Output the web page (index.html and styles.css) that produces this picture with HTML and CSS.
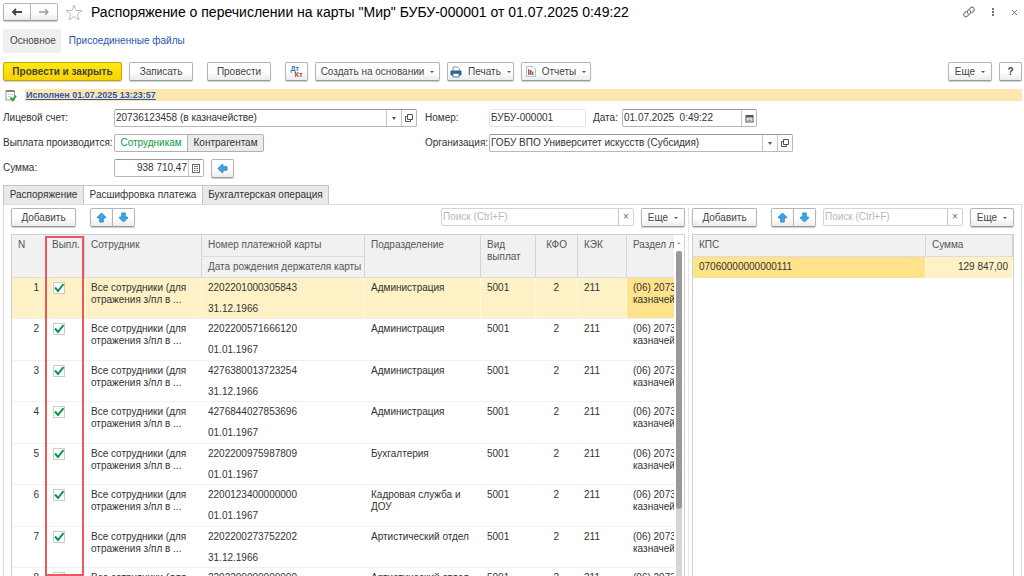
FILE: index.html
```html
<!DOCTYPE html>
<html lang="ru">
<head>
  <meta charset="UTF-8">
  <meta name="viewport" content="width=device-width, initial-scale=1">
  <title>Распоряжение о перечислении на карты "Мир"</title>
  <link rel="stylesheet" href="styles.css">
</head>
<body>
  <!-- Icons used more than once -->
  <svg width="0" height="0" class="sprite" aria-hidden="true">
    <symbol id="i-up" viewBox="0 0 12 12">
      <path d="M6 1 L10.5 5.5 V6.5 H8 V11 H4 V6.5 H1.5 V5.5 Z" fill="#3aa5ea" stroke="#2178bd" stroke-width="0.8" stroke-linejoin="round"/>
    </symbol>
    <symbol id="i-open" viewBox="0 0 10 10">
      <path d="M3.5 1.5 H8.5 V6.5 H3.5 Z M3.5 3.5 H1.5 V8.5 H6.5 V6.5" fill="none" stroke="#555" stroke-width="1"/>
    </symbol>
  </svg>

  <header class="title-bar">
    <div class="btn-group nav-group">
      <button class="btn" aria-label="Назад">
        <svg width="12" height="8" viewBox="0 0 12 8"><path d="M11 4 H2 M5 1 L2 4 L5 7" fill="none" stroke="#444" stroke-width="1.8"/></svg>
      </button>
      <button class="btn" aria-label="Вперед">
        <svg width="12" height="8" viewBox="0 0 12 8"><path d="M1 4 H10 M7 1 L10 4 L7 7" fill="none" stroke="#999" stroke-width="1.3"/></svg>
      </button>
    </div>
    <button class="icon-btn star" aria-label="В избранное">
      <svg width="18" height="17" viewBox="0 0 18 17"><path d="M9 1 L11 6.5 L17 6.6 L12.3 10.2 L14 15.9 L9 12.5 L4 15.9 L5.7 10.2 L1 6.6 L7 6.5 Z" fill="#fff" stroke="#bbb" stroke-width="1"/></svg>
    </button>
    <h1>Распоряжение о перечислении на карты "Мир" БУБУ-000001 от 01.07.2025 0:49:22</h1>
    <div class="window-tools">
      <button class="icon-btn" aria-label="Получить ссылку">
        <svg width="12" height="12" viewBox="0 0 12 12"><g fill="none" stroke="#777" stroke-width="1.1" stroke-linecap="round"><path d="M5 7.6 A2.4 2.4 0 0 1 5 4.4 L7.6 1.8 A2.2 2.2 0 0 1 10.7 4.9 L9 6.6"/><path d="M7 4.4 A2.4 2.4 0 0 1 7 7.6 L4.4 10.2 A2.2 2.2 0 0 1 1.3 7.1 L3 5.4"/></g></svg>
      </button>
      <button class="icon-btn" aria-label="Меню">
        <svg width="4" height="10" viewBox="0 0 4 10"><g fill="#777"><rect x="1" y="1" width="2" height="2"/><rect x="1" y="4" width="2" height="2"/><rect x="1" y="7" width="2" height="2"/></g></svg>
      </button>
      <button class="icon-btn" aria-label="Закрыть">
        <svg width="7" height="7" viewBox="0 0 7 7"><path d="M1 1 L6 6 M6 1 L1 6" stroke="#777" stroke-width="1"/></svg>
      </button>
    </div>
  </header>

  <nav class="sections">
    <a href="#" class="current">Основное</a>
    <a href="#">Присоединенные файлы</a>
  </nav>

  <div class="commands">
    <button class="btn primary">Провести и закрыть</button>
    <button class="btn save">Записать</button>
    <button class="btn post">Провести</button>
    <button class="btn dtkt" aria-label="Показать проводки"><span class="dt">Дт</span><span class="kt">Кт</span></button>
    <button class="btn menu create">Создать на основании</button>
    <button class="btn menu print">
      <svg width="12" height="12" viewBox="0 0 12 12"><path d="M3 5 V1 H7.5 L9.5 3 V5" fill="#fff" stroke="#7b9bb8" stroke-width="1"/><rect x="0.5" y="4.5" width="11" height="5" rx="1" fill="#34618c"/><rect x="3" y="7.5" width="6" height="3.5" fill="#fff" stroke="#5580a5" stroke-width="1"/></svg>
      Печать
    </button>
    <button class="btn menu reports">
      <svg width="10" height="11" viewBox="0 0 10 11"><path d="M0.5 0.5 H7 L9.5 3 V10.5 H0.5 Z" fill="#fff" stroke="#b4c0ce"/><rect x="2" y="3" width="1" height="6" fill="#4a78b0"/><rect x="3.5" y="4" width="2" height="5" fill="#d93a2b"/><rect x="6" y="5.5" width="1.5" height="3.5" fill="#3c9a42"/></svg>
      Отчеты
    </button>
    <button class="btn menu more push">Еще</button>
    <button class="btn help">?</button>
  </div>

  <div class="status">
    <svg width="12" height="13" viewBox="0 0 12 13"><rect x="1" y="2" width="8.5" height="9" fill="#fff" stroke="#999"/><rect x="1" y="1" width="8.5" height="2" fill="#8c8078"/><path d="M3 5.5 H8 M3 7.5 H6" stroke="#ccc"/><path d="M5.5 8.5 L7.7 11.2 L11 6.5" fill="none" stroke="#27a343" stroke-width="2"/></svg>
    <div class="status-line"><a href="#">Исполнен 01.07.2025 13:23:57</a></div>
  </div>

  <form class="details">
    <div class="details-left">
      <label for="account">Лицевой счет:</label>
      <div class="field">
        <input type="text" id="account" value="20736123458 (в казначействе)">
        <button type="button" class="drop" aria-label="Выбрать"></button>
        <button type="button" aria-label="Открыть"><svg width="10" height="10"><use href="#i-open"/></svg></button>
      </div>
      <span>Выплата производится:</span>
      <div class="switch">
        <input type="radio" name="payee" id="payee-staff" checked>
        <label for="payee-staff">Сотрудникам</label>
        <input type="radio" name="payee" id="payee-partner">
        <label for="payee-partner">Контрагентам</label>
      </div>
      <label for="sum">Сумма:</label>
      <div class="sum-row">
        <div class="field sum-field">
          <input type="text" id="sum" value="938 710,47">
          <button type="button" aria-label="Калькулятор">
            <svg width="8" height="9" viewBox="0 0 8 9"><rect x="0.5" y="0.5" width="7" height="8" fill="#fff" stroke="#666"/><path d="M2 2.5 H6" stroke="#666"/><path d="M2 4.5 H6 M2 6.5 H6" stroke="#666" stroke-dasharray="1 0.5"/></svg>
          </button>
        </div>
        <button type="button" class="btn fill" aria-label="Заполнить сумму"><svg class="left" width="11" height="11"><use href="#i-up"/></svg></button>
      </div>
    </div>
    <div class="details-right">
      <label for="number">Номер:</label>
      <div class="number-row">
        <div class="field readonly"><input type="text" id="number" value="БУБУ-000001" readonly></div>
        <label for="date">Дата:</label>
        <div class="field date-field">
          <input type="text" id="date" value="01.07.2025  0:49:22">
          <button type="button" aria-label="Календарь">
            <svg width="9" height="9" viewBox="0 0 9 9"><rect x="1" y="1.5" width="7" height="6.5" fill="#fff" stroke="#555"/><path d="M1 2.5 H8" stroke="#555" stroke-width="2"/><path d="M2.5 5 H7 M2.5 6.5 H7" stroke="#777" stroke-dasharray="1 0.5"/></svg>
          </button>
        </div>
      </div>
      <label for="org">Организация:</label>
      <div class="field">
        <input type="text" id="org" value="ГОБУ ВПО Университет искусств (Субсидия)">
        <button type="button" class="drop" aria-label="Выбрать"></button>
        <button type="button" aria-label="Открыть"><svg width="10" height="10"><use href="#i-open"/></svg></button>
      </div>
    </div>
  </form>

  <div class="tabs" role="tablist">
    <button role="tab" class="tab-order">Распоряжение</button>
    <button role="tab" class="tab-detail active" aria-selected="true">Расшифровка платежа</button>
    <button role="tab" class="tab-entry">Бухгалтерская операция</button>
  </div>

  <main class="panel">
    <section class="pane">
      <div class="pane-tools">
        <button class="btn add">Добавить</button>
        <div class="btn-group">
          <button class="btn" aria-label="Вверх"><svg width="11" height="11"><use href="#i-up"/></svg></button>
          <button class="btn" aria-label="Вниз"><svg class="down" width="11" height="11"><use href="#i-up"/></svg></button>
        </div>
        <div class="field search push">
          <input type="text" placeholder="Поиск (Ctrl+F)" aria-label="Поиск сотрудника">
          <button aria-label="Очистить">×</button>
        </div>
        <button class="btn menu more">Еще</button>
      </div>
      <div class="grid-box">
        <div class="grid-scroll">
          <table class="grid staff" id="staff">
            <colgroup>
              <col class="c-num"><col class="c-paid"><col class="c-name"><col class="c-card"><col class="c-dept">
              <col class="c-kind"><col class="c-kfo"><col class="c-kek"><col>
            </colgroup>
            <thead>
              <tr>
                <th rowspan="2">N</th>
                <th rowspan="2">Выпл.</th>
                <th rowspan="2">Сотрудник</th>
                <th class="card">Номер платежной карты</th>
                <th rowspan="2">Подразделение</th>
                <th rowspan="2">Вид выплат</th>
                <th rowspan="2" class="right">КФО</th>
                <th rowspan="2">КЭК</th>
                <th rowspan="2" class="cut">Раздел л</th>
              </tr>
              <tr><th class="card">Дата рождения держателя карты</th></tr>
            </thead>
          </table>
        </div>
        <div class="scrollbar"><span class="scroll-up"></span><span class="thumb"></span></div>
        <div class="marker"></div>
      </div>
    </section>

    <section class="pane pane-right">
      <div class="pane-tools">
        <button class="btn add">Добавить</button>
        <div class="btn-group">
          <button class="btn" aria-label="Вверх"><svg width="11" height="11"><use href="#i-up"/></svg></button>
          <button class="btn" aria-label="Вниз"><svg class="down" width="11" height="11"><use href="#i-up"/></svg></button>
        </div>
        <div class="field search grow">
          <input type="text" placeholder="Поиск (Ctrl+F)" aria-label="Поиск КПС">
          <button aria-label="Очистить">×</button>
        </div>
        <button class="btn menu more">Еще</button>
      </div>
      <div class="grid-box">
        <table class="grid kps">
          <colgroup><col><col class="c-sum"></colgroup>
          <thead><tr><th>КПС</th><th>Сумма</th></tr></thead>
          <tbody class="selected"><tr><td class="focus">07060000000000111</td><td class="amount">129 847,00</td></tr></tbody>
        </table>
      </div>
    </section>
  </main>

  <script>
    // card number, birth date, department
    const rows = [
      ['2202201000305843', '31.12.1966', 'Администрация'],
      ['2202200571666120', '01.01.1967', 'Администрация'],
      ['4276380013723254', '31.12.1966', 'Администрация'],
      ['4276844027853696', '01.01.1967', 'Администрация'],
      ['2202200975987809', '01.01.1967', 'Бухгалтерия'],
      ['2200123400000000', '01.01.1967', 'Кадровая служба и ДОУ'],
      ['2202200273752202', '31.12.1966', 'Артистический отдел'],
      ['2202200000000000', '01.01.1967', 'Артистический отдел']
    ];

    const staff = document.getElementById('staff');

    // Each employee takes two lines because of the card / birth date column
    rows.forEach(([card, birth, dept], index) => {
      const body = document.createElement('tbody');
      if (index === 0) body.className = 'selected';
      body.innerHTML = `
        <tr>
          <td rowspan="2" class="num">${index + 1}</td>
          <td rowspan="2"><input type="checkbox" class="check" aria-label="Выплачено" checked></td>
          <td rowspan="2">Все сотрудники (для отражения з/пл в ...</td>
          <td>${card}</td>
          <td rowspan="2">${dept}</td>
          <td rowspan="2">5001</td>
          <td rowspan="2" class="kfo">2</td>
          <td rowspan="2">211</td>
          <td rowspan="2" class="cut ${index === 0 ? 'focus' : ''}">(06) 2073<br>казначей</td>
        </tr>
        <tr><td>${birth}</td></tr>
      `;
      staff.appendChild(body);
    });
  </script>
</body>
</html>
```
FILE: styles.css
```css
* {
  box-sizing: border-box;
}

body {
  display: flex;
  flex-direction: column;
  height: 100vh;
  margin: 0;
  padding: 0 2px 0 3px;
  overflow: hidden;
  background: #fff;
  color: #333;
  font: 10px/12px "Liberation Sans", Arial, sans-serif;
}

button,
input {
  margin: 0;
  color: inherit;
  font: inherit;
}

a {
  color: #2a56b0;
  text-decoration: none;
}

svg {
  display: block;
  flex: none;
}

.sprite {
  position: absolute;
}

.push {
  margin-left: auto;
}

.down {
  transform: rotate(180deg);
}

.left {
  transform: rotate(-90deg);
}

/* Buttons */
.btn {
  display: flex;
  flex: none;
  align-items: center;
  justify-content: center;
  gap: 6px;
  height: 19px;
  padding: 0;
  border: 1px solid #b5b5b5;
  border-bottom-color: #999;
  border-radius: 2px;
  background: linear-gradient(#fff 50%, #ececec);
  box-shadow: 0 1px 1px #ccc;
  color: #444;
  white-space: nowrap;
  cursor: pointer;
}

.btn:hover {
  background: #f2f2f2;
}

.btn.primary {
  width: 119px;
  border-color: #c4a600;
  background: linear-gradient(#ffe914, #f7d400);
  font-weight: bold;
}

.btn.menu::after {
  content: "";
  border: 2px solid transparent;
  border-top-color: #555;
  border-bottom: 0;
}

.btn.save {
  width: 64px;
}

.btn.post {
  width: 64px;
  margin-left: 7px;
}

.btn.dtkt {
  width: 23px;
  gap: 0;
  margin-left: 7px;
  font-size: 7px;
  font-weight: bold;
  line-height: 7px;
}

.dt {
  color: #2b7cb5;
  padding-bottom: 6px;
}

.kt {
  color: #c8322b;
  padding-top: 6px;
  margin-left: -4px;
}

.btn.create {
  width: 125px;
}

.btn.print {
  width: 67px;
}

.btn.reports {
  width: 70px;
}

.btn.more {
  width: 44px;
}

.btn.help {
  width: 23px;
  font-weight: bold;
}

.btn.add {
  width: 65px;
}

.btn.fill {
  width: 23px;
}

.btn-group {
  display: flex;
  flex: none;
}

.btn-group .btn {
  width: 23px;
}

.btn-group .btn:first-child {
  border-radius: 2px 0 0 2px;
}

.btn-group .btn:last-child {
  margin-left: -1px;
  border-radius: 0 2px 2px 0;
}

.btn-group.nav-group .btn {
  width: 28px;
  height: 18px;
}

.icon-btn {
  padding: 0;
  border: 0;
  background: none;
  cursor: pointer;
}

/* Window title */
.title-bar {
  display: flex;
  flex: none;
  align-items: center;
  height: 24px;
}

.star {
  margin: 0 8px 0 7px;
}

h1 {
  margin: 0;
  color: #000;
  font-size: 14px;
  font-weight: normal;
  line-height: 18px;
  white-space: nowrap;
}

.window-tools {
  display: flex;
  align-items: center;
  gap: 16px;
  margin-left: auto;
  padding-right: 4px;
}

.sections {
  display: flex;
  flex: none;
  margin-top: 5px;
}

.sections a {
  padding: 6px 8px;
}

.sections .current {
  padding: 6px 5px 6px 7px;
  background: #f0f0f0;
  color: #444;
}

.commands {
  display: flex;
  flex: none;
  gap: 7px;
  margin-top: 9px;
}

/* Execution status line */
.status {
  display: flex;
  flex: none;
  align-items: center;
  gap: 8px;
  height: 14px;
  margin-top: 7px;
  padding-left: 2px;
}

.status-line {
  flex: 1;
  height: 12px;
  background: #ffe6b0;
}

.status-line a {
  display: block;
  padding-left: 1px;
  font-size: 9px;
  font-weight: bold;
  text-decoration: underline;
}

/* Document details */
.details {
  display: flex;
  flex: none;
  gap: 8px;
  margin-top: 7px;
}

.details-left,
.details-right {
  display: grid;
  grid-auto-rows: 18px;
  align-content: start;
  align-items: center;
  row-gap: 7px;
}

.details-left {
  grid-template-columns: 111px minmax(0, 303px);
}

.details-right {
  grid-template-columns: 64px minmax(0, 304px);
}

.field {
  display: flex;
  height: 18px;
  border: 1px solid #b8b8b8;
  border-top-color: #999;
  border-radius: 2px;
  background: #fff;
}

.field input {
  flex: 1;
  min-width: 0;
  padding: 0 1px;
  border: 0;
  outline: 0;
  background: none;
}

.field button {
  display: flex;
  flex: none;
  align-items: center;
  justify-content: center;
  width: 15px;
  padding: 0;
  border: 0;
  border-left: 1px solid #c4c4c4;
  background: none;
  color: #666;
}

.drop::before {
  content: "";
  border: 2px solid transparent;
  border-top: 3px solid #555;
  border-bottom: 0;
}

.field.readonly {
  width: 97px;
  border-color: #e4e4e4;
}

.number-row,
.sum-row {
  display: flex;
  align-items: center;
  gap: 7px;
}

.number-row label {
  width: 22px;
  white-space: nowrap;
}

.date-field {
  width: 135px;
}

.sum-field {
  width: 90px;
}

.sum-field input {
  text-align: right;
}

.switch {
  display: flex;
  width: 150px;
  height: 18px;
  border: 1px solid #b0b0b0;
  border-radius: 2px;
}

.switch input {
  position: absolute;
  opacity: 0;
}

.switch label {
  flex: 1 0 auto;
  background: #ebebeb;
  line-height: 16px;
  text-align: center;
}

.switch label + input + label {
  border-left: 1px solid #b0b0b0;
}

.switch input:checked + label {
  background: #fff;
  color: #0a9a48;
}

/* Tabs */
.tabs {
  display: flex;
  flex: none;
  height: 19px;
  margin-top: 8px;
}

.tabs button {
  padding: 0;
  border: 1px solid #c4c4c4;
  border-left-width: 0;
  border-bottom: 0;
  background: #e9e9e9;
  white-space: nowrap;
}

.tabs .tab-order {
  width: 81px;
  border-left-width: 1px;
}

.tabs .tab-detail {
  width: 119px;
}

.tabs .tab-entry {
  width: 126px;
}

.tabs .active {
  background: #fff;
}

.panel {
  display: grid;
  flex: 1;
  grid-template-columns: minmax(0, 677fr) minmax(0, 326fr);
  min-height: 0;
  padding: 3px 7px 0;
  border: 1px solid #dcdcdc;
  border-bottom: 0;
}

.pane {
  display: flex;
  flex-direction: column;
  min-height: 0;
  padding-right: 3px;
}

.pane-right {
  padding: 0 0 0 3px;
  border-left: 1px dotted #d4d4d4;
}

.pane-tools {
  display: flex;
  flex: none;
  gap: 7px;
  height: 26px;
}

.pane-tools .btn-group {
  margin-left: 7px;
}

.search {
  width: 193px;
  border-color: #d4d4d4;
}

.search.grow {
  flex: 1;
  width: auto;
  min-width: 0;
}

.search input::placeholder {
  color: #b8b8b8;
  opacity: 1;
}

/* Data grids */
.grid-box {
  position: relative;
  display: flex;
  flex: 1;
  min-height: 0;
  border: 1px solid #d0d0d0;
  border-bottom: 0;
}

.grid-scroll {
  flex: 1;
  min-width: 0;
  overflow: hidden;
}

.grid {
  width: 100%;
  border-collapse: separate;
  border-spacing: 0;
  table-layout: fixed;
}

.grid th,
.grid td {
  height: 21px;
  padding: 4px 4px 0 6px;
  overflow: hidden;
  border-right: 1px solid transparent;
  font-weight: normal;
  line-height: 12px;
  text-align: left;
  vertical-align: top;
}

.grid th {
  height: 22px;
  border-right-color: #d4d4d4;
  border-bottom: 1px solid #dcdcdc;
  background: #f1f1f1;
  color: #555;
}

.grid thead tr + tr th {
  height: 21px;
}

.grid th.card {
  padding-right: 0;
  white-space: nowrap;
}

.grid td {
  border-bottom: 1px solid #f0f0f0;
}

.grid tr:first-child td:not([rowspan]) {
  border-bottom-color: transparent;
}

.grid tbody tr + tr td {
  height: 20px;
}

.grid tbody:nth-of-type(even) tr + tr td {
  height: 21px;
}

.grid .right {
  padding-right: 10px;
  text-align: right;
}

.grid .amount {
  text-align: right;
}

.grid .num {
  padding-right: 6px;
  text-align: right;
}

.grid .kfo {
  padding-right: 18px;
  text-align: right;
}

.grid .cut {
  padding-right: 0;
  border-right: 0;
  white-space: nowrap;
  text-overflow: clip;
}

.grid .selected td {
  border-right-color: #fff8e0;
  background: #fdf1c5;
}

.grid .selected td.focus {
  background: #ffe38c;
}

.c-num {
  width: 34px;
}

.c-paid {
  width: 39px;
}

.c-name {
  width: 117px;
}

.c-card {
  width: 163px;
}

.c-dept {
  width: 116px;
}

.c-kind {
  width: 55px;
}

.c-kfo {
  width: 42px;
}

.c-kek {
  width: 49px;
}

.c-sum {
  width: 87px;
}

.kps {
  align-self: flex-start;
}

.check {
  display: block;
  width: 12px;
  height: 12px;
  margin: 0 0 0 1px;
  appearance: none;
  border: 1px solid #ccc;
  background: #fff;
}

.check:checked {
  background: #fff url("data:image/svg+xml,%3Csvg xmlns='http://www.w3.org/2000/svg' viewBox='0 0 10 10'%3E%3Cpath d='M1 4.5 L4 8 L9.5 1' fill='none' stroke='%2309964a' stroke-width='2'/%3E%3C/svg%3E") center / 10px 10px no-repeat;
}

.scrollbar {
  display: flex;
  flex: none;
  flex-direction: column;
  align-items: center;
  width: 10px;
  background: linear-gradient(#fff 16px, #d6d6d6 16px) center / 6px 100% no-repeat;
}

.scroll-up {
  height: 9px;
  margin-bottom: 7px;
}

.scroll-up::before {
  content: "";
  display: block;
  margin-top: 7px;
  border: 2px solid transparent;
  border-top: 0;
  border-bottom-color: #aaa;
}

.thumb {
  width: 6px;
  height: 258px;
  border-radius: 3px;
  background: #999;
}

/* Red frame round the "Выпл." column */
.marker {
  position: absolute;
  top: 1px;
  bottom: 0;
  left: 33px;
  width: 39px;
  border: 2px solid #e8585c;
  pointer-events: none;
}
```
